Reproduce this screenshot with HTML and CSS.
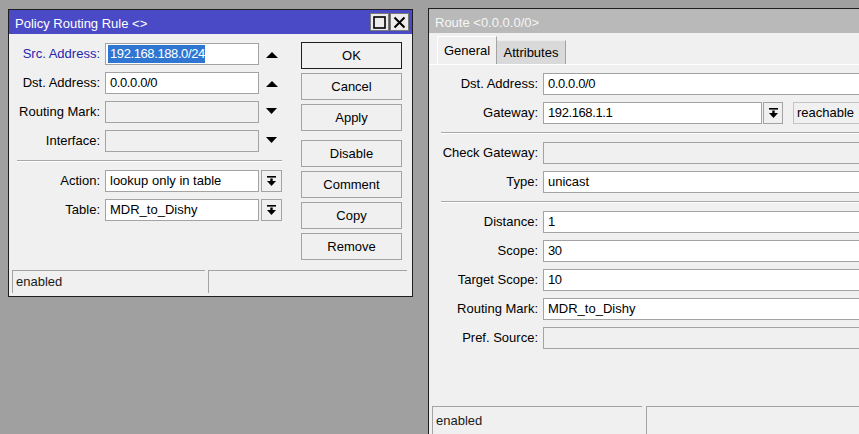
FILE: index.html
```html
<!DOCTYPE html>
<html>
<head>
<meta charset="utf-8">
<link rel="stylesheet" href="styles.css">
</head>
<body>
<div class="desk">
  <div class="win rule">
    <div class="titlebar active">
      <span class="title">Policy Routing Rule &lt;&gt;</span>
      <div class="tbtns">
        <span class="tbtn"><svg width="13" height="13" viewBox="0 0 13 13"><rect x="1" y="1" width="11" height="11" fill="none" stroke="#000" stroke-width="1.6"/></svg></span>
        <span class="tbtn"><svg width="13" height="13" viewBox="0 0 13 13"><path d="M1.5 1.5 L11.5 11.5 M11.5 1.5 L1.5 11.5" stroke="#000" stroke-width="2" fill="none"/></svg></span>
      </div>
    </div>
    <div class="body">
      <div class="form">
        <div class="row">
          <span class="lbl blue">Src. Address:</span>
          <span class="inp selbox num"><span class="sel">192.168.188.0/24</span></span>
          <span class="ctl"><svg width="12" height="6" viewBox="0 0 12 6" class="up"><polygon points="0,6 12,6 6,0" fill="#000"/></svg></span>
        </div>
        <div class="row">
          <span class="lbl">Dst. Address:</span>
          <span class="inp num">0.0.0.0/0</span>
          <span class="ctl"><svg width="12" height="6" viewBox="0 0 12 6" class="up"><polygon points="0,6 12,6 6,0" fill="#000"/></svg></span>
        </div>
        <div class="row">
          <span class="lbl">Routing Mark:</span>
          <span class="inp dis"></span>
          <span class="ctl"><svg width="11" height="6" viewBox="0 0 11 6" class="down"><polygon points="0,0 11,0 5.5,6" fill="#000"/></svg></span>
        </div>
        <div class="row">
          <span class="lbl">Interface:</span>
          <span class="inp dis"></span>
          <span class="ctl"><svg width="11" height="6" viewBox="0 0 11 6" class="down"><polygon points="0,0 11,0 5.5,6" fill="#000"/></svg></span>
        </div>
        <div class="sep"></div>
        <div class="row">
          <span class="lbl">Action:</span>
          <span class="inp">lookup only in table</span>
          <span class="ctl dd"><svg width="9" height="10" viewBox="0 0 9 10"><rect x="0" y="0" width="9" height="1.6" fill="#000"/><rect x="3.3" y="2.5" width="2.4" height="3" fill="#000"/><polygon points="0,5 9,5 4.5,10" fill="#000"/></svg></span>
        </div>
        <div class="row">
          <span class="lbl">Table:</span>
          <span class="inp">MDR_to_Dishy</span>
          <span class="ctl dd"><svg width="9" height="10" viewBox="0 0 9 10"><rect x="0" y="0" width="9" height="1.6" fill="#000"/><rect x="3.3" y="2.5" width="2.4" height="3" fill="#000"/><polygon points="0,5 9,5 4.5,10" fill="#000"/></svg></span>
        </div>
      </div>
      <div class="buttons">
        <div class="btn def">OK</div>
        <div class="btn">Cancel</div>
        <div class="btn">Apply</div>
        <div class="btn gapped">Disable</div>
        <div class="btn">Comment</div>
        <div class="btn">Copy</div>
        <div class="btn">Remove</div>
      </div>
    </div>
    <div class="status">
      <div class="seg first">enabled</div>
      <div class="seg grow"></div>
    </div>
  </div>

  <div class="win route">
    <div class="titlebar inactive">
      <span class="title">Route &lt;0.0.0.0/0&gt;</span>
    </div>
    <div class="tabs">
      <div class="tab on">General</div>
      <div class="tab off">Attributes</div>
    </div>
    <div class="panel">
      <div class="row">
        <span class="lbl">Dst. Address:</span>
        <span class="inp wide num">0.0.0.0/0</span>
      </div>
      <div class="row">
        <span class="lbl">Gateway:</span>
        <span class="inp gw num">192.168.1.1</span>
        <span class="ctl dd gwdd"><svg width="9" height="10" viewBox="0 0 9 10"><rect x="0" y="0" width="9" height="1.6" fill="#000"/><rect x="3.3" y="2.5" width="2.4" height="3" fill="#000"/><polygon points="0,5 9,5 4.5,10" fill="#000"/></svg></span>
        <span class="reach">reachable</span>
      </div>
      <div class="sep"></div>
      <div class="row">
        <span class="lbl">Check Gateway:</span>
        <span class="inp wide dis"></span>
      </div>
      <div class="row">
        <span class="lbl">Type:</span>
        <span class="inp wide">unicast</span>
      </div>
      <div class="sep"></div>
      <div class="row">
        <span class="lbl">Distance:</span>
        <span class="inp wide num">1</span>
      </div>
      <div class="row">
        <span class="lbl">Scope:</span>
        <span class="inp wide num">30</span>
      </div>
      <div class="row">
        <span class="lbl">Target Scope:</span>
        <span class="inp wide num">10</span>
      </div>
      <div class="row">
        <span class="lbl">Routing Mark:</span>
        <span class="inp wide">MDR_to_Dishy</span>
      </div>
      <div class="row">
        <span class="lbl">Pref. Source:</span>
        <span class="inp wide dis"></span>
      </div>
    </div>
    <div class="status rstatus">
      <div class="seg rfirst">enabled</div>
      <div class="seg grow"></div>
    </div>
  </div>
</div>
</body>
</html>
```

FILE: styles.css
```css
html, body {
  margin: 0;
  height: 100%;
}
body {
  background: #a0a0a0;
  font-family: "Liberation Sans", Arial, sans-serif;
  font-size: 13px;
  color: #000;
  overflow: hidden;
}
.desk {
  display: flex;
  align-items: flex-start;
  padding: 8px 0 0 8px;
  gap: 15px;
}
.win {
  box-sizing: border-box;
  border: 1px solid #1e1e1e;
  background: #f0f0f0;
  display: flex;
  flex-direction: column;
  flex: none;
}
.rule {
  width: 405px;
  height: 288px;
  margin-top: 1px;
}
.route {
  flex: 1;
  min-width: 0;
  border-right: none;
}
.titlebar {
  height: 24px;
  display: flex;
  align-items: center;
  flex: none;
}
.titlebar.active {
  background: #4a4ac6;
  color: #fff;
}
.titlebar.inactive {
  background: #b9b9b9;
  color: #f6f6f6;
}
.title {
  flex: 1;
  align-self: flex-start;
  padding: 4px 0 0 6px;
  line-height: 20px;
  white-space: nowrap;
}
.tbtns {
  display: flex;
  gap: 1px;
  margin-right: 3px;
}
.tbtn {
  width: 19px;
  height: 18px;
  box-sizing: border-box;
  background: #ececec;
  border: 1px solid #7a7a7a;
  display: flex;
  align-items: center;
  justify-content: center;
}
.body {
  flex: 1;
  display: flex;
  padding: 8px 10px 0 8px;
}
.form {
  width: 265px;
  display: flex;
  flex-direction: column;
  gap: 7px;
  margin-top: 1px;
}
.row {
  display: flex;
  align-items: center;
  height: 22px;
}
.lbl {
  width: 83px;
  flex: none;
  text-align: right;
  margin-right: 5px;
  white-space: nowrap;
  line-height: 22px;
}
.panel .lbl {
  width: 97px;
}
.lbl.blue {
  color: #2626b0;
}
.inp {
  width: 154px;
  height: 22px;
  flex: none;
  box-sizing: border-box;
  border: 1px solid #a3a3a3;
  background: #fff;
  padding-left: 4px;
  line-height: 20px;
  white-space: nowrap;
  overflow: hidden;
}
.inp.num {
  letter-spacing: -0.4px;
}
.inp.dis {
  background: #f0f0f0;
}
.inp.selbox {
  padding-left: 2px;
}
.sel {
  display: inline-block;
  line-height: 18px;
  padding: 0 0 0 2px;
  background: #2f76d2;
  color: #fff;
}
.inp.wide {
  flex: 1;
  width: auto;
  border-right: none;
}
.inp.gw {
  width: 219px;
}
.ctl {
  width: 21px;
  height: 22px;
  margin-left: 2px;
  flex: none;
  box-sizing: border-box;
  display: flex;
  align-items: center;
  justify-content: center;
}
.ctl .up {
  margin-top: 2px;
}
.ctl .down {
  margin-top: -2px;
}
.dd {
  border: 1px solid #a3a3a3;
  background: #f0f0f0;
}
.gwdd {
  width: 20px;
  margin-left: 1px;
}
.reach {
  margin-left: 10px;
  flex: 1;
  height: 22px;
  box-sizing: border-box;
  border: 1px solid #c4c4c4;
  border-right: none;
  background: #f0f0f0;
  padding-left: 3px;
  line-height: 20px;
  white-space: nowrap;
  overflow: hidden;
}
.sep {
  height: 0;
  margin: 1px 0;
  border-top: 1px solid #a8a8a8;
  border-bottom: 1px solid #fff;
}
.buttons {
  margin-left: 19px;
  width: 101px;
  display: flex;
  flex-direction: column;
  gap: 4px;
}
.btn {
  height: 27px;
  box-sizing: border-box;
  border: 1px solid #a3a3a3;
  background: #f0f0f0;
  text-align: center;
  line-height: 25px;
}
.btn.def {
  border-color: #1e1e1e;
}
.btn.gapped {
  margin-top: 5px;
}
.status {
  height: 26px;
  box-sizing: border-box;
  display: flex;
  gap: 3px;
  padding: 0 5px 3px 3px;
  flex: none;
}
.seg {
  box-sizing: border-box;
  border-top: 1px solid #a3a3a3;
  border-left: 1px solid #a3a3a3;
  padding-left: 3px;
  line-height: 22px;
  color: #1a1a1a;
}
.seg.first {
  width: 193px;
}
.seg.grow {
  flex: 1;
}
.tabs {
  height: 31px;
  display: flex;
  align-items: flex-end;
  padding-left: 8px;
  flex: none;
}
.tab {
  box-sizing: border-box;
  text-align: center;
  line-height: 20px;
  white-space: nowrap;
}
.tab.on {
  width: 60px;
  height: 28px;
  padding-top: 4px;
  border-top: 1px solid #fff;
  border-left: 1px solid #fff;
  border-right: 1px solid #a3a3a3;
  background: #f0f0f0;
}
.tab.off {
  width: 69px;
  height: 24px;
  padding-top: 2px;
  border-top: 1px solid #ececec;
  border-right: 1px solid #a3a3a3;
  background: #d9d9d9;
}
.panel {
  height: 342px;
  box-sizing: border-box;
  border-top: 1px solid #fff;
  padding: 8px 0 0 12px;
  display: flex;
  flex-direction: column;
  gap: 7px;
  flex: none;
}
.rstatus {
  height: 28px;
  gap: 4px;
  padding: 0 0 0 3px;
}
.seg.rfirst {
  width: 210px;
  line-height: 28px;
}
```
